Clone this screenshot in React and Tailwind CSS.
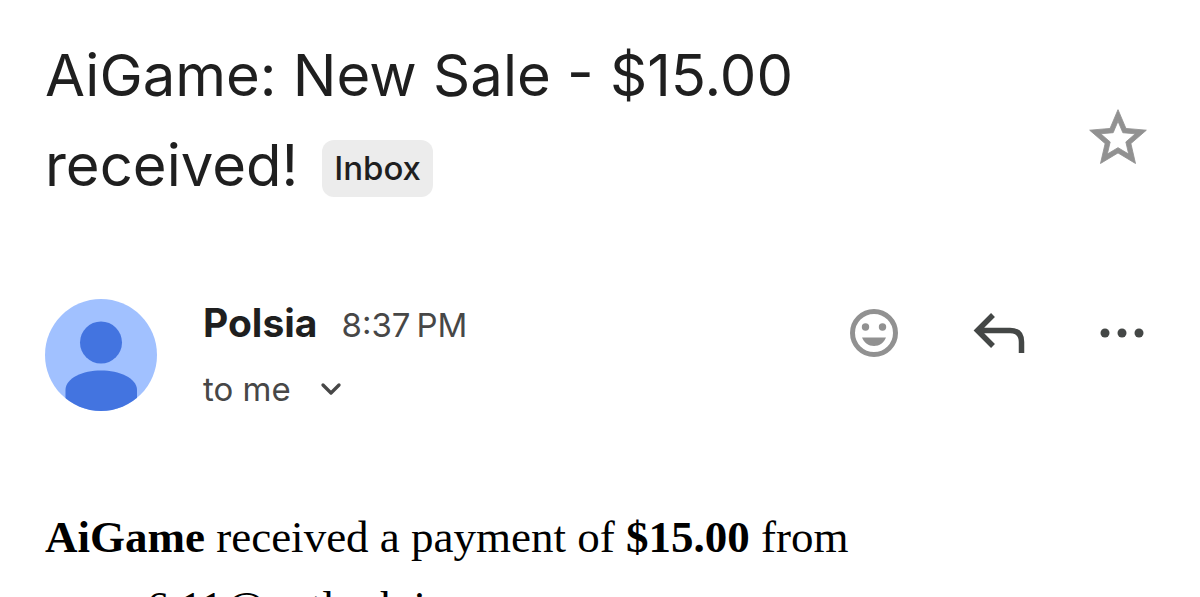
import { ChevronDown } from 'lucide-react'

function Avatar() {
  return (
    <svg viewBox="0 0 112 112" className="size-28 shrink-0" role="img" aria-label="Polsia">
      <defs>
        <clipPath id="disc">
          <circle cx="56" cy="56" r="56" />
        </clipPath>
      </defs>
      <g clipPath="url(#disc)">
        <rect width="112" height="112" fill="#a1c1ff" />
        <circle cx="56" cy="43.5" r="21" fill="#4374e0" />
        <path d="M20.500 112V91C20.500 79 38 71.500 56 71.500S92 79 92 91v21z" fill="#4374e0" />
      </g>
    </svg>
  )
}

function StarIcon() {
  return (
    <svg viewBox="0 0 24 24" className="size-[68px]" fill="#919191" stroke="#919191" strokeWidth="0.300">
      <path d="M22 9.240l-7.190-.620L12 2 9.190 8.630 2 9.240l5.460 4.730L5.820 21 12 17.270 18.180 21l-1.630-7.030L22 9.240zM12 15.400l-3.760 2.270 1-4.280-3.320-2.880 4.380-.380L12 6.100l1.710 4.040 4.380.380-3.320 2.880 1 4.280L12 15.400z" />
    </svg>
  )
}

function SmileIcon() {
  return (
    <svg viewBox="0 0 48 48" className="size-12" fill="#919191">
      <circle cx="24" cy="24" r="21.500" fill="none" stroke="#919191" strokeWidth="5" />
      <circle cx="15.500" cy="18" r="3.700" />
      <circle cx="32.500" cy="18" r="3.700" />
      <path d="M12 28.500H36C34 33.500 29.500 37 24 37S14 33.500 12 28.500Z" />
    </svg>
  )
}

function ReplyIcon() {
  return (
    <svg viewBox="0 0 52 42" className="h-[42px] w-[52px]" fill="none" stroke="#444746" strokeWidth="5.500">
      <path d="M20 3L4.500 18.500L20 34M5 18.500H37Q48.500 18.500 48.500 30V41" />
    </svg>
  )
}

function MoreIcon() {
  return (
    <svg viewBox="0 0 44 10" className="h-[10px] w-11" fill="#444746">
      <circle cx="5" cy="5" r="4.500" />
      <circle cx="22" cy="5" r="4.500" />
      <circle cx="39" cy="5" r="4.500" />
    </svg>
  )
}

export default function App() {
  return (
    <main className="h-screen overflow-hidden bg-white pt-[30px] pr-12 pl-[45px] font-['Inter',sans-serif] text-[#1f1f1f]">
      <header className="flex items-center justify-between">
        <h1 className="max-w-[800px] text-[58px] leading-[90px]">
          AiGame: New Sale - $15.00 received!
          <span className="ml-6 inline-block rounded-xl bg-[#ececec] px-3 align-[6px] text-[33px] leading-[57px] font-medium">Inbox</span>
        </h1>
        <button aria-label="Star" className="mt-9"><StarIcon /></button>
      </header>

      <section className="mt-[89px] flex items-start">
        <Avatar />
        <div className="ml-[46px] flex-1">
          <div className="flex items-baseline gap-6 leading-[48px]">
            <strong className="text-[39px] font-bold">Polsia</strong>
            <time className="text-[33px] text-[#474747]">8:37{'\u202f'}PM</time>
          </div>
          <button className="mt-4 flex items-center gap-6 text-[33px] leading-[48px] text-[#474747]">
            to me
            <ChevronDown size={32} strokeWidth={2.5} />
          </button>
        </div>
        <div className="mr-2 flex items-center gap-[75px] pt-[10px]">
          <button aria-label="Add reaction"><SmileIcon /></button>
          <button aria-label="Reply"><ReplyIcon /></button>
          <button aria-label="More options"><MoreIcon /></button>
        </div>
      </section>

      <p className="mt-[89px] font-['Liberation_Serif',serif] text-[45px] leading-[70px] text-black">
        <strong>AiGame</strong> received a payment of <strong>$15.00</strong> from
        <br />
        xxxx.6.11@outlook.in
      </p>
    </main>
  )
}
